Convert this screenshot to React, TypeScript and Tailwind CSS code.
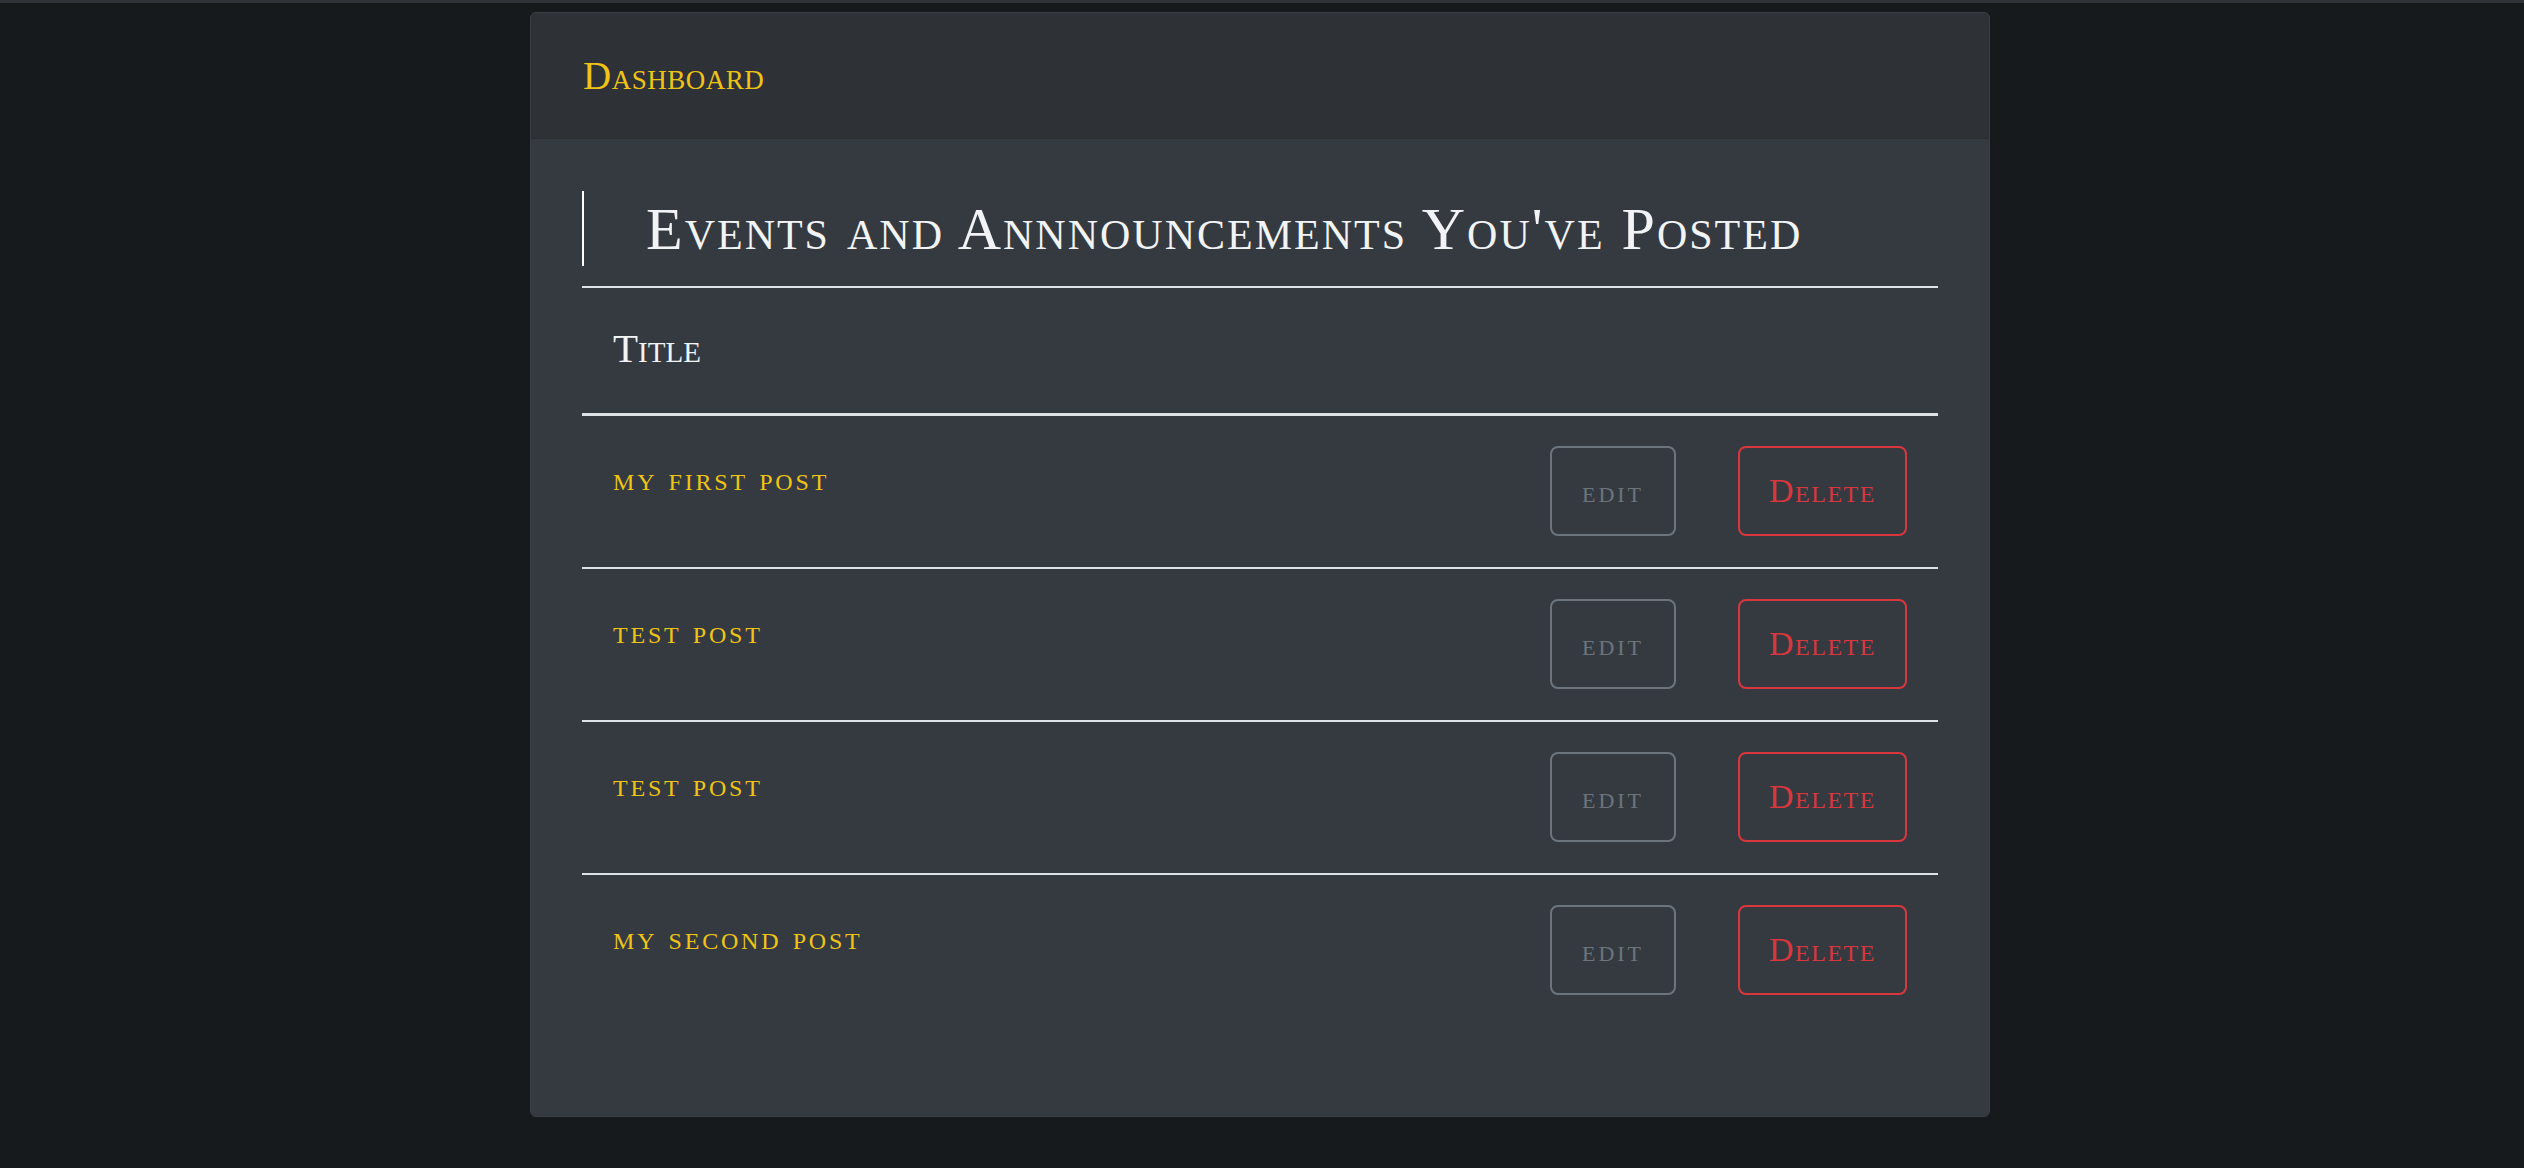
const posts = ["my first post", "test post", "test post", "my second post"];

const serif = "font-['Liberation_Serif',serif] [font-variant:small-caps]";

function PostRow({ title, last }: { title: string; last: boolean }) {
  return (
    <div
      className={`flex items-start justify-between pl-[31px] pr-[31px] pt-[30px] pb-[31px] ${
        last ? "" : "border-b-2 border-[#dee2e6]"
      }`}
    >
      <div className={`${serif} pt-[16px] text-[34px] leading-none tracking-[2.8px] text-[#efc416]`}>{title}</div>
      <div className="flex gap-[62px]">
        <button
          className={`${serif} flex h-[90px] w-[126px] items-center justify-center rounded-lg border-2 border-[#6c757d] text-[32px] leading-none tracking-[3px] text-[#6c757d]`}
        >
          edit
        </button>
        <button
          className={`${serif} flex h-[90px] w-[169px] items-center justify-center rounded-lg border-2 border-[#d9363e] text-[34px] leading-none tracking-[1.5px] text-[#d9363e]`}
        >
          Delete
        </button>
      </div>
    </div>
  );
}

export default function App() {
  return (
    <div className="min-h-screen bg-[#171a1d]">
      <div className="h-[3px] bg-[#2f3337]" />
      <div className="ml-[530px] mt-[9px] w-[1460px] overflow-hidden rounded-md border border-[#3a3f46] bg-[#353a41]">
        <div className="flex h-[126px] items-center border-b border-[#2a2d31] bg-[#2e3237] pl-[52px]">
          <span className={`${serif} text-[39px] leading-none tracking-[0.5px] text-[#efc416]`}>Dashboard</span>
        </div>

        <div className="px-[51px] pt-[52px] pb-[90px]">
          <div className="flex h-[75px] items-center border-l-2 border-white pl-[62px]">
            <h1 className={`${serif} text-[60px] leading-none tracking-[2px] text-[#f1f3f5]`}>
              Events and Annnouncements You've Posted
            </h1>
          </div>

          <div className="mt-[20px] border-t-2 border-[#dee2e6]">
            <div className="h-[128px] border-b-[3px] border-[#dee2e6] pl-[31px] pt-[40px]">
              <span className={`${serif} text-[41px] leading-none text-[#f1f3f5]`}>Title</span>
            </div>
            {posts.map((p, i) => (
              <PostRow key={i} title={p} last={i === posts.length - 1} />
            ))}
          </div>
        </div>
      </div>
    </div>
  );
}
